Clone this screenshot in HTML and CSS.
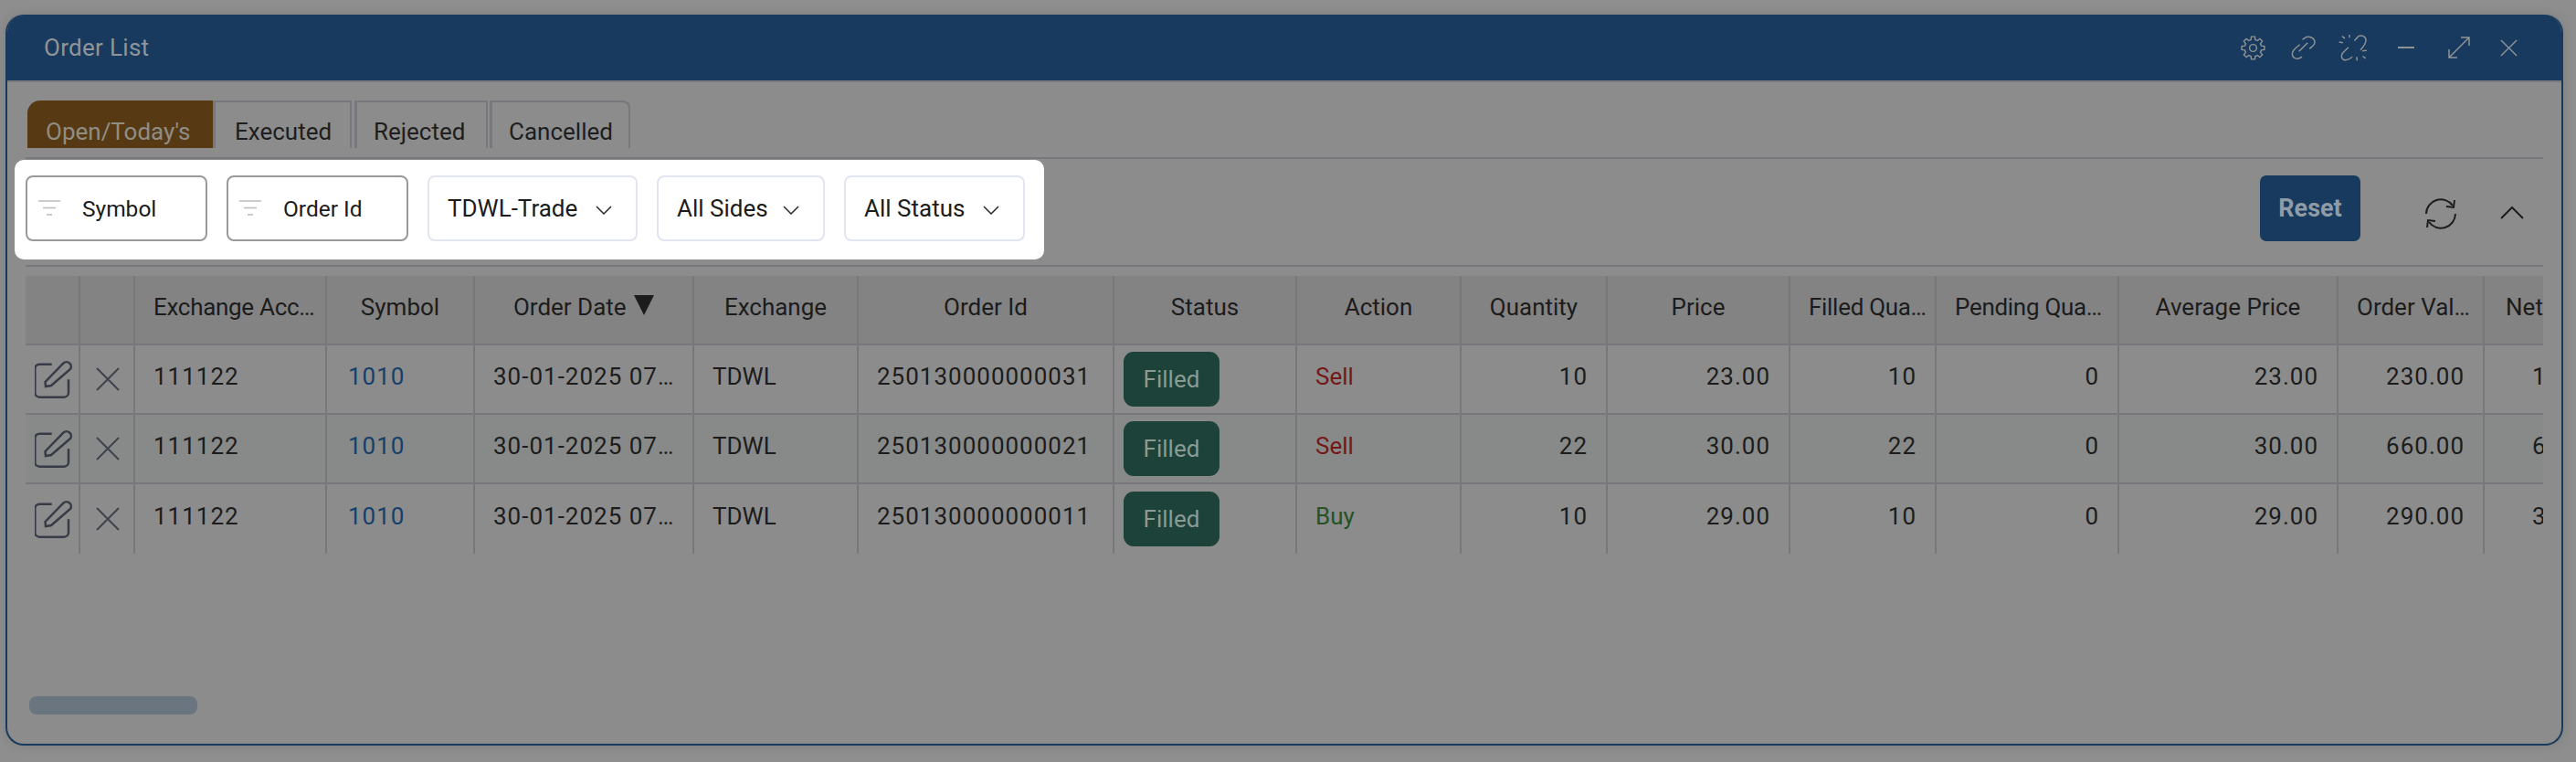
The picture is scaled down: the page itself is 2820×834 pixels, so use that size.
FILE: index.html
```html
<!DOCTYPE html>
<html lang="en">
<head>
    <meta charset="UTF-8">
    <meta name="viewport" content="width=device-width, initial-scale=1.0">
    <title>Order List</title>
    <link rel="stylesheet" href="styles.css">
</head>
<body>
    <div class="window">
        <header class="window-head">
            <span class="window-title">Order List</span>
            <div class="window-icons">
                <svg class="wi wi-gear" viewBox="0 0 28 28"><circle cx="14" cy="14" r="4"/><path d="M11.970 1.160L16.030 1.160L16.480 4.730L18.800 5.690L21.640 3.480L24.520 6.360L22.310 9.200L23.270 11.520L26.840 11.970L26.840 16.030L23.270 16.480L22.310 18.800L24.520 21.640L21.640 24.520L18.800 22.310L16.480 23.270L16.030 26.840L11.970 26.840L11.520 23.270L9.200 22.310L6.360 24.520L3.480 21.640L5.690 18.800L4.730 16.480L1.160 16.030L1.160 11.970L4.730 11.520L5.690 9.200L3.480 6.360L6.360 3.480L9.200 5.690L11.520 4.730Z"/></svg>
                <svg class="wi wi-link" viewBox="0 0 28 28"><path d="M13 4.500L16 2.500C20 0 27 2 27 8C27 11 24 12 21 15"/><path d="M10 10C6 14 2 16 1.500 20C1 26 7 28 12.500 24"/><path d="M9 18L19 8"/></svg>
                <svg class="wi wi-unlink" viewBox="0 0 32 32"><path d="M18 7.700L22.300 3C26 1 31 3 31 7C31 11 28 15 24.700 18.300"/><path d="M11.300 15.300L5 21.500C2 25 4 30 8 29.700C11 29.500 13 28 15.700 26"/><path d="M12.300 1V4.300M4 2.700L7.300 5.300M.7 9.300L5 10M32 18.700L27 19.300M20.700 26L21 30.300M27.300 25.300L30.700 27.700"/></svg>
                <svg class="wi wi-min" viewBox="0 0 18 2"><path d="M0 1h18"/></svg>
                <svg class="wi wi-expand" viewBox="0 0 24 24"><path d="M1 23L23 1M14 1h9v9M1 14v9h9"/></svg>
                <svg class="wi wi-close" viewBox="0 0 20 20"><path d="M1 1l18 18M19 1L1 19"/></svg>
            </div>
        </header>
        <div class="window-body">
            <div class="tabs">
                <div class="tab active">Open/Today's</div>
                <div class="tab">Executed</div>
                <div class="tab">Rejected</div>
                <div class="tab">Cancelled</div>
            </div>
            <div class="toolbar">
                <div class="filters">
                    <div class="search">
                        <svg class="filter-icon" viewBox="0 0 24 18"><path d="M0 1h24M5 8.500h14M9 16h6"/></svg>
                        <span>Symbol</span>
                    </div>
                    <div class="search">
                        <svg class="filter-icon" viewBox="0 0 24 18"><path d="M0 1h24M5 8.500h14M9 16h6"/></svg>
                        <span>Order Id</span>
                    </div>
                    <div class="select select-trade"><span>TDWL-Trade</span><svg class="chevron" viewBox="0 0 18 10"><path d="M1 1l8 8 8-8"/></svg></div>
                    <div class="select select-sides"><span>All Sides</span><svg class="chevron" viewBox="0 0 18 10"><path d="M1 1l8 8 8-8"/></svg></div>
                    <div class="select select-status"><span>All Status</span><svg class="chevron" viewBox="0 0 18 10"><path d="M1 1l8 8 8-8"/></svg></div>
                </div>
                <div class="actions">
                    <button class="reset">Reset</button>
                    <svg class="refresh" viewBox="0 0 36 36"><path d="M2 18A16 16 0 0 1 31 9"/><path d="M34 18A16 16 0 0 1 5 27"/><path d="M33 3l-1 8-8-1M3 33l1-8 8 1"/></svg>
                    <svg class="collapse" viewBox="0 0 26 14"><path d="M1 13L13 1l12 12"/></svg>
                </div>
            </div>
            <div class="table-wrap">
                <table class="orders">
                    <colgroup>
                        <col class="c60"><col class="c60"><col class="c210"><col class="c162"><col class="c240"><col class="c180"><col class="c280"><col class="c200">
                        <col class="c180"><col class="c160"><col class="c200"><col class="c160"><col class="c200"><col class="c240"><col class="c160"><col class="c160">
                    </colgroup>
                    <thead>
                        <tr>
                            <th></th><th></th>
                            <th class="trunc">Exchange Account</th>
                            <th>Symbol</th>
                            <th>Order Date <i class="sort"></i></th>
                            <th>Exchange</th>
                            <th>Order Id</th>
                            <th>Status</th>
                            <th>Action</th>
                            <th>Quantity</th>
                            <th>Price</th>
                            <th class="trunc">Filled Quantity</th>
                            <th class="trunc">Pending Quantity</th>
                            <th>Average Price</th>
                            <th class="trunc order-val">Order Value</th>
                            <th>Net Value</th>
                        </tr>
                    </thead>
                    <tbody>
                        <tr>
                            <td class="icon"><svg class="edit" viewBox="0 0 42 42"><path d="M18.700 4.700H5.300a5 5 0 0 0-5 5v26a5 5 0 0 0 5 5h26.700a5 5 0 0 0 5-5V21.300"/><path d="M11.500 24L31.500 3.500a5 5 0 0 1 7.500 6.500L18 28L12 29Z"/></svg></td>
                            <td class="icon"><svg class="del" viewBox="0 0 26 26"><path d="M1 1l24 24M25 1L1 25"/></svg></td>
                            <td class="digits">111122</td><td class="digits sym">1010</td><td class="digits date">30-01-2025 07:45:12</td><td>TDWL</td><td class="digits">250130000000031</td>
                            <td class="status"><span class="badge">Filled</span></td>
                            <td class="sell">Sell</td><td class="digits num">10</td><td class="digits num">23.00</td><td class="digits num">10</td><td class="digits num">0</td><td class="digits num">23.00</td><td class="digits num">230.00</td><td class="digits num">170.00</td>
                        </tr>
                        <tr class="even">
                            <td class="icon"><svg class="edit" viewBox="0 0 42 42"><path d="M18.700 4.700H5.300a5 5 0 0 0-5 5v26a5 5 0 0 0 5 5h26.700a5 5 0 0 0 5-5V21.300"/><path d="M11.500 24L31.500 3.500a5 5 0 0 1 7.500 6.500L18 28L12 29Z"/></svg></td>
                            <td class="icon"><svg class="del" viewBox="0 0 26 26"><path d="M1 1l24 24M25 1L1 25"/></svg></td>
                            <td class="digits">111122</td><td class="digits sym">1010</td><td class="digits date">30-01-2025 07:41:36</td><td>TDWL</td><td class="digits">250130000000021</td>
                            <td class="status"><span class="badge">Filled</span></td>
                            <td class="sell">Sell</td><td class="digits num">22</td><td class="digits num">30.00</td><td class="digits num">22</td><td class="digits num">0</td><td class="digits num">30.00</td><td class="digits num">660.00</td><td class="digits num">660.00</td>
                        </tr>
                        <tr>
                            <td class="icon"><svg class="edit" viewBox="0 0 42 42"><path d="M18.700 4.700H5.300a5 5 0 0 0-5 5v26a5 5 0 0 0 5 5h26.700a5 5 0 0 0 5-5V21.300"/><path d="M11.500 24L31.500 3.500a5 5 0 0 1 7.500 6.500L18 28L12 29Z"/></svg></td>
                            <td class="icon"><svg class="del" viewBox="0 0 26 26"><path d="M1 1l24 24M25 1L1 25"/></svg></td>
                            <td class="digits">111122</td><td class="digits sym">1010</td><td class="digits date">30-01-2025 07:38:02</td><td>TDWL</td><td class="digits">250130000000011</td>
                            <td class="status"><span class="badge">Filled</span></td>
                            <td class="buy">Buy</td><td class="digits num">10</td><td class="digits num">29.00</td><td class="digits num">10</td><td class="digits num">0</td><td class="digits num">29.00</td><td class="digits num">290.00</td><td class="digits num">390.00</td>
                        </tr>
                    </tbody>
                </table>
            </div>
            <div class="scrollbar"></div>
        </div>
    </div>
</body>
</html>
```

FILE: styles.css
```css
body {
    margin: 0;
    height: 834px;
    overflow: hidden;
    background: #8e8e8e;
    font-family: 'Roboto', 'Noto Sans', sans-serif;
    font-size: 26px;
    color: #1c1c1c;
}

svg {
    display: block;
    fill: none;
    stroke: currentColor;
}

.window {
    box-sizing: border-box;
    width: 2800px;
    height: 800px;
    margin: 16px 0 0 6px;
    border: 2px solid #183a5e;
    border-top: 0;
    border-radius: 20px;
    background: #8c8c8c;
    box-shadow: 0 0 12px rgba(0, 0, 0, 0.12);
    overflow: hidden;
}

.window-head {
    height: 72px;
    border-bottom: 2px solid #79797e;
    background: #183a5e;
    color: #8f9599;
    display: flex;
    align-items: center;
    justify-content: space-between;
    padding: 0 50px 0 42px;
    margin: 0 -2px;
}

.window-title {
    letter-spacing: 0.3px;
}

.window-icons {
    display: flex;
    align-items: center;
    color: #8e9396;
}

.wi {
    stroke-width: 1.5;
}

.wi-gear { width: 27px; height: 27px; }
.wi-link { width: 27px; height: 27px; margin-left: 28px; }
.wi-unlink { width: 31px; height: 31px; margin-left: 25px; }
.wi-min { width: 18px; height: 2px; margin-left: 34px; stroke-width: 2; }
.wi-expand { width: 24px; height: 24px; margin-left: 37px; }
.wi-close { width: 19px; height: 19px; margin-left: 33px; }

.window-body {
    padding: 20px 20px 0;
}

/* tabs */
.tabs {
    display: flex;
    padding-left: 2px;
    height: 52px;
}

.tab {
    box-sizing: border-box;
    width: 152px;
    border: 2px solid #77777c;
    border-bottom: 0;
    border-left-width: 3px;
    padding: 17px 0 0 21px;
    line-height: 30px;
    color: #1e1e1e;
}

.tab:nth-child(3) {
    width: 146px;
    margin-left: 3px;
    padding-left: 18px;
}

.tab:nth-child(4) {
    width: 154px;
    margin-left: 2px;
    padding-left: 18px;
    border-top-right-radius: 8px;
}

.tab.active {
    width: 203px;
    background: #573a14;
    border: 0;
    border-top-left-radius: 14px;
    color: #908d85;
    padding: 19px 0 0 20px;
}

.toolbar {
    display: flex;
    justify-content: space-between;
    height: 116px;
    margin-top: 10px;
    border-top: 2px solid #77777c;
    border-bottom: 2px solid #77777c;
}

.filters {
    display: flex;
    gap: 21px;
    align-self: flex-start;
    margin: 1px 0 0 -12px;
    padding: 17px 21px 20px 12px;
    background: #fff;
    border-radius: 10px;
}

.search, .select {
    box-sizing: border-box;
    height: 72px;
    display: flex;
    align-items: center;
    border-radius: 8px;
    background: #fff;
}

.search {
    width: 199px;
    border: 2px solid #999;
    padding: 0 0 0 12px;
    font-size: 24.5px;
}

.filter-icon {
    width: 24px;
    height: 18px;
    stroke: #bcbcbc;
    stroke-width: 1.5;
    margin-right: 24px;
}

.select {
    border: 2px solid #e2e5ef;
    padding: 0 26px 0 20px;
    justify-content: space-between;
}

.select-trade { width: 230px; }
.select-sides { width: 184px; }
.select-status { width: 198px; }

.chevron {
    width: 18px;
    height: 10px;
    margin-top: 4px;
    stroke: #2a2a2a;
    stroke-width: 1.5;
}

.actions {
    display: flex;
    align-items: flex-start;
    padding-top: 18px;
}

.reset {
    width: 110px;
    height: 72px;
    border: 0;
    border-radius: 7px;
    background: #183a5e;
    color: #8f9ba6;
    font: bold 27px 'Roboto', sans-serif;
}

.refresh {
    width: 36px;
    height: 36px;
    stroke: #1c1c1c;
    stroke-width: 2;
    margin: 24px 0 0 70px;
}

.collapse {
    width: 26px;
    height: 14px;
    stroke: #1c1c1c;
    stroke-width: 2;
    margin: 34px 21px 0 47px;
}

/* table */
.table-wrap {
    margin-top: 10px;
    width: 2756px;
    overflow: hidden;
}

.orders {
    table-layout: fixed;
    width: 2852px;
    border-collapse: separate;
    border-spacing: 0;
}

.c60 { width: 60px; }
.c160 { width: 160px; }
.c162 { width: 162px; }
.c180 { width: 180px; }
.c200 { width: 200px; }
.c210 { width: 210px; }
.c240 { width: 240px; }
.c280 { width: 280px; }

th, td {
    box-sizing: border-box;
    height: 76px;
    padding: 0 20px 6px;
    border-right: 2px solid #77777c;
    border-bottom: 2px solid #77777c;
    white-space: nowrap;
    overflow: hidden;
    text-overflow: ellipsis;
    text-align: left;
}

th {
    background: #838383;
    font-weight: 400;
    text-align: center;
}

th.trunc {
    text-align: left;
    padding-right: 6px;
    letter-spacing: -0.3px;
}

th.order-val {
    padding-right: 12px;
    letter-spacing: 0;
}

tbody tr:last-child td { border-bottom: 0; }

.even td { background: #878a88; }

.sort {
    display: inline-block;
    width: 0;
    height: 0;
    border-left: 11px solid transparent;
    border-right: 11px solid transparent;
    border-top: 22px solid #1c1c1c;
    margin-left: 2px;
}

td.icon {
    padding: 0;
}

.edit {
    width: 42px;
    height: 42px;
    margin-left: 10px;
    stroke: #363b46;
    stroke-width: 2.5;
}

.del {
    width: 26px;
    height: 26px;
    margin-left: 17px;
    stroke: #3f434c;
    stroke-width: 2;
}

.digits { letter-spacing: 1px; }
.date { padding-right: 17px; }
.sym { color: #163f6a; padding-left: 23px; }
.sell { color: #741818; }
.buy { color: #265226; }
.num { text-align: right; }

td.status {
    padding: 0 0 0 10px;
}

.badge {
    display: block;
    width: 105px;
    height: 60px;
    line-height: 60px;
    border-radius: 11px;
    background: #1d4239;
    color: #8a9b94;
    text-align: center;
}

.scrollbar {
    width: 184px;
    height: 20px;
    margin: 156px 0 0 4px;
    border-radius: 8px;
    background: #6b7580;
}
```
